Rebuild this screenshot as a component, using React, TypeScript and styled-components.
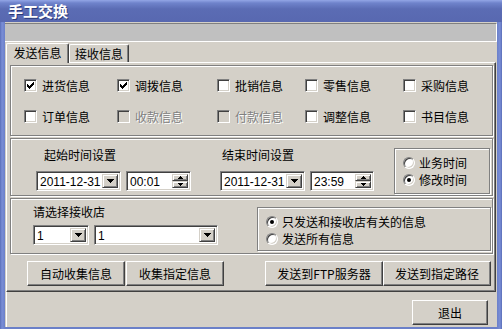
import React from 'react';
import styled, { createGlobalStyle } from 'styled-components';

const FACE = '#d4d0c8';
const SHADOW = '#808080';
const DARK = '#404040';
const CN = `"Noto Sans CJK SC", "Noto Sans", sans-serif`;
const LATIN = `"Liberation Sans", Arial, sans-serif`;

const GlobalStyle = createGlobalStyle`
  html, body { margin: 0; padding: 0; }
  body { background: #ffffff; font-family: ${CN}; font-size: 12px; color: #000; }
  * { box-sizing: border-box; }
`;

const Window = styled.div`
  width: 502px;
  height: 329px;
  display: flex;
  flex-direction: column;
  padding: 0 5px 2px 5px;
  background: linear-gradient(to right, #5a6eb8 0px, #7a8ed6 2px, #6b80c9 5px, #6b80c9 497px, #7a8ed6 500px, #5a6eb8 502px);
`;

const TitleBar = styled.div`
  height: 22px;
  margin: 0 -5px;
  padding-left: 8px;
  display: flex;
  align-items: center;
  background: linear-gradient(#93a6e6 0px, #6f83cb 3px, #5b6cb4 9px, #5868b0 100%);
`;

const Title = styled.span`
  font-family: ${CN};
  font-weight: 700;
  font-size: 15px;
  line-height: 18px;
  color: #fff;
  text-shadow: 1px 1px 0 #2b3a78;
`;

const Client = styled.div`
  flex: 1;
  background: ${FACE};
  display: flex;
  flex-direction: column;
`;

const StatusStrip = styled.div`
  margin-top: 1px;
  height: 19px;
  background: #c0c0c0;
  border-top: 1px solid ${SHADOW};
  border-bottom: 1px solid #fff;
  border-right: 1px solid #fff;
`;

const TabsRow = styled.div`
  height: 20px;
  padding-left: 1px;
  display: flex;
  align-items: flex-start;
`;

const Tab = styled.div<{ $active?: boolean; $w: number }>`
  position: relative;
  z-index: 2;
  width: ${(p) => p.$w}px;
  height: ${(p) => (p.$active ? 20 : 18)}px;
  margin-top: ${(p) => (p.$active ? 1 : 2)}px;
  padding-bottom: ${(p) => (p.$active ? 2 : 0)}px;
  display: flex;
  align-items: center;
  justify-content: center;
  font-family: ${CN};
  font-size: 12px;
  line-height: 14px;
  background: ${FACE};
  border-top: 1px solid #fff;
  border-left: 1px solid #fff;
  border-right: 1px solid ${DARK};
  box-shadow: inset -1px 0 0 ${SHADOW};
  border-radius: 2px 2px 0 0;
`;

const TabPanel = styled.div`
  position: relative;
  z-index: 1;
  margin-left: 1px;
  width: 490px;
  height: 230px;
  flex: none;
  border-top: 1px solid #fff;
  border-left: 1px solid #fff;
  border-right: 1px solid ${DARK};
  border-bottom: 1px solid ${DARK};
  box-shadow: inset -1px -1px 0 ${SHADOW};
  padding: 2px 2px 0 3px;
  display: flex;
  flex-direction: column;
`;

const Group = styled.div<{ $h: number }>`
  position: relative;
  flex: none;
  height: ${(p) => p.$h}px;
  border: 1px solid ${SHADOW};
  box-shadow: 1px 1px 0 #fff, inset 1px 1px 0 #fff;
  margin-bottom: 2px;
`;

const CheckGroup = styled(Group)`
  display: grid;
  grid-template-columns: 93px 100px 88px 98px 1fr;
  grid-auto-rows: 13px;
  row-gap: 18px;
  align-content: start;
  padding: 13px 0 0 13px;
`;

const CheckItem = styled.div<{ $disabled?: boolean }>`
  display: flex;
  align-items: center;
  gap: 5px;
  height: 13px;
  font-family: ${CN};
  font-size: 12px;
  line-height: 13px;
  white-space: nowrap;
  color: ${(p) => (p.$disabled ? SHADOW : '#000')};
  text-shadow: ${(p) => (p.$disabled ? '1px 1px 0 #fff' : 'none')};
`;

const CheckBoxSquare = styled.span<{ $disabled?: boolean }>`
  width: 13px;
  height: 13px;
  flex: none;
  display: flex;
  align-items: center;
  justify-content: center;
  border: 1px solid;
  border-color: ${SHADOW} #fff #fff ${SHADOW};
  box-shadow: inset 1px 1px 0 ${DARK}, inset -1px -1px 0 ${FACE};
  background: ${(p) => (p.$disabled ? FACE : '#fff')};
`;

const TimeGroup = styled(Group)`
  display: flex;
  align-items: flex-start;
  padding: 9px 2px 0 25px;
`;

const StoreGroup = styled(Group)`
  display: flex;
  align-items: flex-start;
  padding: 6px 1px 0 22px;
  margin-bottom: 0;
`;

const FieldBlock = styled.div<{ $w?: number }>`
  display: flex;
  flex-direction: column;
  width: ${(p) => (p.$w ? `${p.$w}px` : 'auto')};
`;

const FieldLabel = styled.div<{ $indent: number }>`
  padding-left: ${(p) => p.$indent}px;
  font-family: ${CN};
  font-size: 12px;
  line-height: 14px;
  height: 14px;
  white-space: nowrap;
`;

const ControlsRow = styled.div<{ $mt: number }>`
  display: flex;
  gap: 5px;
  margin-top: ${(p) => p.$mt}px;
`;

const Sunken = styled.div<{ $w: number }>`
  width: ${(p) => p.$w}px;
  height: 20px;
  flex: none;
  display: flex;
  align-items: stretch;
  padding: 2px;
  border: 1px solid;
  border-color: ${SHADOW} #fff #fff ${SHADOW};
  box-shadow: inset 1px 1px 0 ${DARK}, inset -1px -1px 0 ${FACE};
  background: #fff;
`;

const FieldText = styled.span`
  flex: 1;
  padding-left: 1px;
  font-family: ${LATIN};
  font-size: 12px;
  line-height: 16px;
  white-space: nowrap;
  overflow: hidden;
`;

const RaisedBtn = styled.div`
  background: ${FACE};
  border: 1px solid;
  border-color: ${FACE} ${DARK} ${DARK} ${FACE};
  box-shadow: inset 1px 1px 0 #fff, inset -1px -1px 0 ${SHADOW};
  display: flex;
  align-items: center;
  justify-content: center;
`;

const DropBtn = styled(RaisedBtn)`
  width: 16px;
  flex: none;
`;

const SpinCol = styled.div`
  width: 16px;
  flex: none;
  display: flex;
  flex-direction: column;
`;

const SpinBtn = styled(RaisedBtn)`
  flex: 1;
`;

const RadioBox = styled(Group)<{ $w: number; $mt: number }>`
  width: ${(p) => p.$w}px;
  margin: ${(p) => p.$mt}px 0 0 auto;
  display: flex;
  flex-direction: column;
  gap: 4px;
  padding: 7px 0 0 8px;
`;

const RadioItem = styled.div`
  display: flex;
  align-items: center;
  gap: 4px;
  height: 13px;
  font-family: ${CN};
  font-size: 12px;
  line-height: 13px;
  white-space: nowrap;
`;

const RadioCircle = styled.span<{ $on?: boolean }>`
  position: relative;
  width: 12px;
  height: 12px;
  flex: none;
  border-radius: 50%;
  border: 1px solid;
  border-color: ${SHADOW} #fff #fff ${SHADOW};
  box-shadow: inset 1px 1px 0 ${DARK}, inset -1px -1px 0 ${FACE};
  background: #fff;
  &::after {
    content: '';
    display: ${(p) => (p.$on ? 'block' : 'none')};
    position: absolute;
    left: 3px;
    top: 3px;
    width: 4px;
    height: 4px;
    border-radius: 50%;
    background: #000;
  }
`;

const ButtonRow = styled.div`
  display: flex;
  justify-content: space-between;
  margin-top: 7px;
  padding: 0 2px 0 17px;
`;

const ButtonPair = styled.div<{ $gap: number }>`
  display: flex;
  gap: ${(p) => p.$gap}px;
`;

const PushButton = styled.button<{ $w: number }>`
  width: ${(p) => p.$w}px;
  height: 25px;
  margin: 0;
  padding: 0;
  background: ${FACE};
  font-family: ${CN};
  font-size: 12px;
  line-height: 14px;
  color: #000;
  white-space: nowrap;
  border: 1px solid;
  border-color: #fff ${DARK} ${DARK} #fff;
  box-shadow: inset -1px -1px 0 ${SHADOW}, inset 1px 1px 0 ${FACE};
  cursor: default;
`;

const Footer = styled.div`
  flex: 1;
  display: flex;
  justify-content: flex-end;
  align-items: flex-start;
  padding: 8px 9px 0 0;
  margin-left: 1px;
  border-left: 1px solid #fff;
`;

const CheckMark = () => (
  <svg width="7" height="7" viewBox="0 0 7 7" shapeRendering="crispEdges">
    <path
      fill="#000"
      d="M6 0h1v1h-1z M5 1h2v1h-2z M0 2h1v1h-1z M4 2h3v1h-3z M0 3h2v1h-2z M3 3h3v1h-3z M0 4h5v1h-5z M1 5h3v1h-3z M2 6h1v1h-1z"
    />
  </svg>
);

const DownTriangle = () => (
  <svg width="7" height="4" viewBox="0 0 7 4" shapeRendering="crispEdges">
    <path fill="#000" d="M0 0h7v1h-7z M1 1h5v1h-5z M2 2h3v1h-3z M3 3h1v1h-1z" />
  </svg>
);

const SmallArrow = ({ up }: { up?: boolean }) => (
  <svg width="5" height="3" viewBox="0 0 5 3" shapeRendering="crispEdges">
    <path
      fill="#000"
      d={up ? 'M2 0h1v1h-1z M1 1h3v1h-3z M0 2h5v1h-5z' : 'M0 0h5v1h-5z M1 1h3v1h-3z M2 2h1v1h-1z'}
    />
  </svg>
);

const Check = ({ label, checked, disabled }: { label: string; checked?: boolean; disabled?: boolean }) => (
  <CheckItem $disabled={disabled}>
    <CheckBoxSquare $disabled={disabled}>{checked && <CheckMark />}</CheckBoxSquare>
    <span>{label}</span>
  </CheckItem>
);

const Radio = ({ label, on }: { label: string; on?: boolean }) => (
  <RadioItem>
    <RadioCircle $on={on} />
    <span>{label}</span>
  </RadioItem>
);

const Combo = ({ value, w }: { value: string; w: number }) => (
  <Sunken $w={w}>
    <FieldText>{value}</FieldText>
    <DropBtn>
      <DownTriangle />
    </DropBtn>
  </Sunken>
);

const Spin = ({ value, w }: { value: string; w: number }) => (
  <Sunken $w={w}>
    <FieldText>{value}</FieldText>
    <SpinCol>
      <SpinBtn>
        <SmallArrow up />
      </SpinBtn>
      <SpinBtn>
        <SmallArrow />
      </SpinBtn>
    </SpinCol>
  </Sunken>
);

const checks: { label: string; checked?: boolean; disabled?: boolean }[] = [
  { label: '进货信息', checked: true },
  { label: '调拨信息', checked: true },
  { label: '批销信息' },
  { label: '零售信息' },
  { label: '采购信息' },
  { label: '订单信息' },
  { label: '收款信息', disabled: true },
  { label: '付款信息', disabled: true },
  { label: '调整信息' },
  { label: '书目信息' },
];

export default function App() {
  return (
    <>
      <GlobalStyle />
      <Window>
        <TitleBar>
          <Title>手工交换</Title>
        </TitleBar>
        <Client>
          <StatusStrip />
          <TabsRow>
            <Tab $active $w={63}>发送信息</Tab>
            <Tab $w={60}>接收信息</Tab>
          </TabsRow>
          <TabPanel>
            <CheckGroup $h={71}>
              {checks.map((c) => (
                <Check key={c.label} {...c} />
              ))}
            </CheckGroup>
            <TimeGroup $h={58}>
              <FieldBlock $w={184}>
                <FieldLabel $indent={8}>起始时间设置</FieldLabel>
                <ControlsRow $mt={9}>
                  <Combo value="2011-12-31" w={85} />
                  <Spin value="00:01" w={65} />
                </ControlsRow>
              </FieldBlock>
              <FieldBlock>
                <FieldLabel $indent={2}>结束时间设置</FieldLabel>
                <ControlsRow $mt={9}>
                  <Combo value="2011-12-31" w={85} />
                  <Spin value="23:59" w={64} />
                </ControlsRow>
              </FieldBlock>
              <RadioBox $h={46} $w={96} $mt={0}>
                <Radio label="业务时间" />
                <Radio label="修改时间" on />
              </RadioBox>
            </TimeGroup>
            <StoreGroup $h={56}>
              <FieldBlock>
                <FieldLabel $indent={0}>请选择接收店</FieldLabel>
                <ControlsRow $mt={6}>
                  <Combo value="1" w={56} />
                  <Combo value="1" w={124} />
                </ControlsRow>
              </FieldBlock>
              <RadioBox $h={44} $w={234} $mt={2}>
                <Radio label="只发送和接收店有关的信息" on />
                <Radio label="发送所有信息" />
              </RadioBox>
            </StoreGroup>
            <ButtonRow>
              <ButtonPair $gap={1}>
                <PushButton $w={98}>自动收集信息</PushButton>
                <PushButton $w={98}>收集指定信息</PushButton>
              </ButtonPair>
              <ButtonPair $gap={0}>
                <PushButton $w={118}>发送到FTP服务器</PushButton>
                <PushButton $w={108}>发送到指定路径</PushButton>
              </ButtonPair>
            </ButtonRow>
          </TabPanel>
          <Footer>
            <PushButton $w={76}>退出</PushButton>
          </Footer>
        </Client>
      </Window>
    </>
  );
}
